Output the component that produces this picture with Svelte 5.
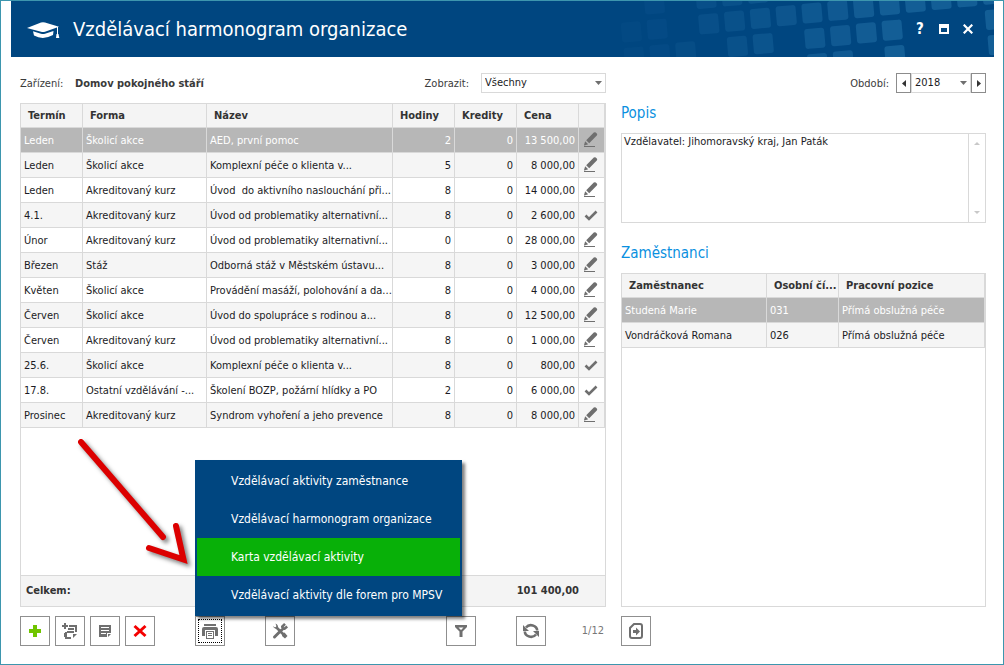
<script>
  const rows = [
    ['Leden', 'Školicí akce', 'AED, první pomoc', '2', '13 500,00', false],
    ['Leden', 'Školicí akce', 'Komplexní péče o klienta v...', '5', '8 000,00', false],
    ['Leden', 'Akreditovaný kurz', 'Úvod  do aktivního naslouchání při...', '8', '14 000,00', false],
    ['4.1.', 'Akreditovaný kurz', 'Úvod od problematiky alternativní...', '8', '2 600,00', true],
    ['Únor', 'Akreditovaný kurz', 'Úvod od problematiky alternativní...', '0', '28 000,00', false],
    ['Březen', 'Stáž', 'Odborná stáž v Městském ústavu...', '8', '3 000,00', false],
    ['Květen', 'Školicí akce', 'Provádění masáží, polohování a da...', '8', '4 000,00', false],
    ['Červen', 'Školicí akce', 'Úvod do spolupráce s rodinou a...', '8', '12 500,00', false],
    ['Červen', 'Akreditovaný kurz', 'Úvod od problematiky alternativní...', '8', '1 000,00', false],
    ['25.6.', 'Školicí akce', 'Komplexní péče o klienta v...', '8', '800,00', true],
    ['17.8.', 'Ostatní vzdělávání -...', 'Školení BOZP, požární hlídky a PO', '2', '6 000,00', true],
    ['Prosinec', 'Akreditovaný kurz', 'Syndrom vyhoření a jeho prevence', '8', '8 000,00', false]
  ];

  const employees = [
    ['Studená Marie', '031', 'Přímá obslužná péče'],
    ['Vondráčková Romana', '026', 'Přímá obslužná péče']
  ];

  const menu = [
    'Vzdělávací aktivity zaměstnance',
    'Vzdělávací harmonogram organizace',
    'Karta vzdělávací aktivity',
    'Vzdělávací aktivity dle forem pro MPSV'
  ];

  // Header tiles as [column, row] on a slanted lattice; they fade to the left.
  const tiles = [
    [-6, -1], [-4, -1], [-3, -1], [-2, -1],
    [-7, 1], [-6, 0], [-4, 0], [-3, 0], [-2, 0], [-1, 0], [0, 0], [1, 0], [2, 0], [3, 0], [4, 0], [5, 0], [6, 0], [7, 0],
    [-7, 0], [-6, 1], [-5, 1], [-3, 1], [-2, 1], [0, 1], [1, 1], [2, 1], [3, 1], [7, 1],
    [0, 2], [1, 2], [3, 2], [7, 2]
  ].map(([c, r]) => ({
    x: 212 + c * 25.8 + r * 2.8,
    y: 12 - c * 2.7 + r * 25.3,
    o: Math.min(0.22, 0.03 + (c + 7) * 0.019)
  }));

  let selected = $state(0);
  let employee = $state(0);
  let active = $state(2);
  let shown = $state('Všechny');
  let year = $state('2018');
  let note = $state('Vzdělavatel: Jihomoravský kraj, Jan Paták');
</script>

<div class="window">
  <header>
    <svg class="tiles" viewBox="0 0 394 56" aria-hidden="true">
      {#each tiles as t}
        <rect x="-10" y="-10" width="20" height="20" rx="3" fill="#58b4e4" fill-opacity={t.o} transform={`translate(${t.x} ${t.y}) rotate(-5)`} />
      {/each}
    </svg>
    <svg class="cap" viewBox="0 0 33 18" aria-hidden="true">
      <path fill="#fff" d="M0 6 L14 .5 Q16 0 18 .5 L32 4.700 L18 9.700 Q16 10.200 14 9.700Z" />
      <path fill="#fff" d="M6 9.200 L14 11.700 Q16 12.200 18 11.700 L26.500 9 L26 13 Q16 18.500 7 13.500Z" />
      <path fill="none" stroke="#fff" d="M30.500 5v8" />
      <path fill="#fff" d="M29.500 12h2l.8 4h-3.300z" />
    </svg>
    <h1>Vzdělávací harmonogram organizace</h1>
    <div class="controls">
      <button aria-label="Nápověda">?</button>
      <button aria-label="Maximalizovat"><svg width="10" height="10" viewBox="0 0 10 10"><path fill="#fff" fill-rule="evenodd" d="M0 0h10v10H0zM2 4v4h6V4z" /></svg></button>
      <button aria-label="Zavřít"><svg width="10" height="10" viewBox="0 0 10 10"><path stroke="#fff" stroke-width="2.200" d="M.7.7l8.600 8.600M9.300.7L.7 9.300" /></svg></button>
    </div>
  </header>

  <main>
    <section class="column">
      <div class="filters">
        <span class="facility">Zařízení:</span>
        <strong>Domov pokojného stáří</strong>
        <label class="push" for="show">Zobrazit:</label>
        <div class="select wide">
          <select id="show" bind:value={shown}><option>Všechny</option></select>
          <svg viewBox="0 0 7 4"><path d="M0 0h7L3.500 4z" /></svg>
        </div>
      </div>

      <div class="panel">
        <table>
          <colgroup><col class="c62" /><col class="c124" /><col /><col class="c62" /><col class="c62" /><col class="c62" /><col class="c26" /></colgroup>
          <thead>
            <tr><th>Termín</th><th>Forma</th><th>Název</th><th>Hodiny</th><th>Kredity</th><th>Cena</th><th></th></tr>
          </thead>
          <tbody>
            {#each rows as [term, form, name, hours, price, done], i}
              <tr class:selected={selected === i} onclick={() => (selected = i)}>
                <td>{term}</td><td>{form}</td><td>{name}</td>
                <td class="num">{hours}</td><td class="num">0</td><td class="num">{price}</td>
                <td class="state">
                  {#if done}
                    <svg viewBox="0 0 16 18"><path fill="none" stroke="#6f6f6f" stroke-width="2.600" d="M2.500 9.500l3.500 3.500 7.500-7.500" /></svg>
                  {:else}
                    <svg viewBox="0 0 16 18">
                      <path fill="#6f6f6f" d="M3.200 9.200L10.800 1.600Q11.800.8 12.800 1.600L14 2.800Q14.600 3.600 13.800 4.400L6.200 12.200z" />
                      <path fill="#6f6f6f" d="M2.200 10.200l3 3-3.700 1.300H1v-.6z" />
                      <path fill="#6f6f6f" d="M1 15h11v1H1z" />
                    </svg>
                  {/if}
                </td>
              </tr>
            {/each}
          </tbody>
        </table>
        <div class="total"><span>Celkem:</span><span>101 400,00</span></div>
      </div>

      <div class="toolbar">
        <div class="group">
          <button class="tool" aria-label="Přidat"><svg viewBox="0 0 18 18"><path fill="#70c400" d="M7 3h4v4h4v4h-4v4H7v-4H3V7h4z" /></svg></button>
          <button class="tool" aria-label="Přidat kopii"><svg viewBox="0 0 18 18">
            <path fill="none" stroke="#6f6f6f" stroke-width="2" d="M4 1v6M1 4h6" />
            <path fill="#6f6f6f" d="M8 3h8v7h-2V5H8zM7 6h6v2H7zM6 9h7v2H6zM4 10h2v5h4v2H4zM3 11h1v4H3zM12 12h4l-4 4z" />
          </svg></button>
          <button class="tool" aria-label="Upravit"><svg viewBox="0 0 18 18">
            <path fill="#6f6f6f" fill-rule="evenodd" d="M3 3h12v8h-4v4H3zM5 5v1h8V5zM5 8v1h8V8zM5 11v1h5v-1z" />
            <path fill="#6f6f6f" d="M12 12h3l-3 3z" />
          </svg></button>
          <button class="tool" aria-label="Smazat"><svg viewBox="0 0 18 18"><path stroke="#f40000" stroke-width="3" d="M3.500 4l11 10M14.500 4l-11 10" /></svg></button>
        </div>

        <div class="anchor">
          <button class="tool focused" aria-label="Tisk" aria-haspopup="menu"><svg viewBox="0 0 18 18">
            <path fill="#6f6f6f" d="M3 2h12v2H3z" />
            <path fill="#6f6f6f" fill-rule="evenodd" d="M3 5h12q2 0 2 2v7h-3V8H4v6H1V7q0-2 2-2z" />
            <path fill="#6f6f6f" fill-rule="evenodd" d="M5 9h8v8H5zM6 10v6h6v-6z" />
            <path fill="#6f6f6f" d="M7 11h4v1H7zM7 13h4v1H7z" />
          </svg></button>
          <div class="menu" role="menu">
            {#each menu as item, i}
              <button role="menuitem" class:active={active === i} onmouseenter={() => (active = i)}>{item}</button>
            {/each}
          </div>
          <svg class="pointer" viewBox="0 0 120 135" aria-hidden="true">
            <path d="M6 7l82 95" />
            <path d="M74 113l34.500 11.500L101 91" />
          </svg>
        </div>

        <button class="tool" aria-label="Nástroje"><svg viewBox="0 0 18 18">
          <path stroke="#6f6f6f" stroke-width="2.600" d="M5 5l9.500 9.500" />
          <path fill="#6f6f6f" d="M4.500 1.500Q7.500 2.500 7 6.500Q3 7.500 1.800 4L4 5.500 5.500 4.500z" />
          <path fill="#6f6f6f" d="M11.500 11.500l2-1 3 3.500-2.500 2.500-3-2.500z" />
          <path stroke="#6f6f6f" stroke-width="3" stroke-linecap="round" d="M3.500 15l6-6" />
          <path fill="none" stroke="#6f6f6f" stroke-width="2.600" d="M14 1.800L11.300 4.500q0 2.200 2.200 2.200L16.200 4.500M9.500 9l3-2.500" />
        </svg></button>

        <button class="tool filter" aria-label="Filtr"><svg viewBox="0 0 18 18">
          <path fill="#6f6f6f" fill-rule="evenodd" d="M3 3h12v2l-4.500 4.500V15h-3V9.500L3 5zM6.500 5.500L9 8l2.500-2.500z" />
        </svg></button>
        <button class="tool" aria-label="Obnovit"><svg viewBox="0 0 18 18">
          <path fill="none" stroke="#6f6f6f" stroke-width="2.600" d="M4 5.500a6.200 5.600 0 0 1 11.200 3M14 12.500a6.200 5.600 0 0 1-11.200-3" />
          <path fill="#6f6f6f" d="M1 3v6h6zM17 15V9h-6z" />
        </svg></button>
        <span class="counter">1/12</span>
      </div>
    </section>

    <section class="column">
      <div class="filters">
        <label class="push" for="year">Období:</label>
        <div class="period">
          <button aria-label="Předchozí rok"><svg width="4" height="7" viewBox="0 0 4 7"><path d="M4 0v7L0 3.500z" /></svg></button>
          <div class="select">
            <select id="year" bind:value={year}><option>2018</option></select>
            <svg viewBox="0 0 7 4"><path d="M0 0h7L3.500 4z" /></svg>
          </div>
          <button aria-label="Další rok"><svg width="4" height="7" viewBox="0 0 4 7"><path d="M0 0v7l4-3.500z" /></svg></button>
        </div>
      </div>

      <h2><label for="note">Popis</label></h2>
      <div class="note">
        <textarea id="note" bind:value={note}></textarea>
        <div class="scroll">
          <svg width="6" height="3" viewBox="0 0 6 3"><path d="M0 3h6L3 0z" /></svg>
          <svg width="6" height="3" viewBox="0 0 6 3"><path d="M0 0h6L3 3z" /></svg>
        </div>
      </div>

      <h2 class="spaced">Zaměstnanci</h2>
      <div class="panel">
        <table>
          <colgroup><col class="c145" /><col class="c72" /><col /></colgroup>
          <thead>
            <tr><th>Zaměstnanec</th><th>Osobní čí...</th><th>Pracovní pozice</th></tr>
          </thead>
          <tbody>
            {#each employees as person, i}
              <tr class:selected={employee === i} onclick={() => (employee = i)}>
                {#each person as value}<td>{value}</td>{/each}
              </tr>
            {/each}
          </tbody>
        </table>
      </div>

      <div class="toolbar">
        <button class="tool" aria-label="Otevřít kartu"><svg viewBox="0 0 18 18">
          <path fill="none" stroke="#6f6f6f" stroke-width="2" d="M7 2h6q2 0 2 2v10q0 2-2 2H5q-2 0-2-2V6z" />
          <path fill="#6f6f6f" d="M6 8h3V5.500L13 9.500 9 13.500V11H6z" />
        </svg></button>
      </div>
    </section>
  </main>
</div>

<style>
  :global(body) { margin: 0; }
  .window, .window * { box-sizing: border-box; }
  .window {
    display: flex;
    flex-direction: column;
    min-height: 100vh;
    border: 1px solid #3d96ae;
    background: #fff;
    color: #1b1b24;
    font: 11px/14px 'DejaVu Sans Condensed', 'Noto Sans', sans-serif;
  }
  button, select, textarea {
    margin: 0;
    padding: 0;
    border: 0;
    border-radius: 0;
    background: none;
    color: inherit;
    font: inherit;
  }
  button { cursor: pointer; }

  header {
    position: relative;
    display: flex;
    align-items: center;
    height: 56px;
    margin: 0 9px 0 10px;
    padding: 0 18px 0 16px;
    overflow: hidden;
    background: #004680;
    color: #fff;
  }
  .tiles { position: absolute; top: 0; right: 0; width: 394px; height: 56px; }
  .cap { width: 33px; height: 18px; margin-top: 4px; }
  h1 { margin: 0 0 0 13px; font-size: 20px; line-height: 26px; font-weight: 400; white-space: nowrap; }
  .controls { position: relative; display: flex; gap: 8px; margin-left: auto; }
  .controls button {
    display: flex;
    align-items: center;
    justify-content: center;
    width: 16px;
    height: 20px;
    font-size: 15px;
    font-weight: 700;
  }

  main {
    flex: 1;
    display: grid;
    grid-template-columns: minmax(0, 586fr) minmax(0, 365fr);
    gap: 15px;
    padding: 16px 17px 18px 19px;
  }
  .column { display: flex; flex-direction: column; min-width: 0; }
  .filters { display: flex; align-items: center; height: 20px; color: #3a3a3a; }
  .filters label, .filters span, .filters strong { padding-top: 2px; }
  .column:first-child .filters { margin-bottom: 10px; }
  .facility { width: 55px; }
  .push { margin-left: auto; margin-right: 12px; }
  .period .select, .period { display: flex; }
  .column:last-child .push { margin-right: 7px; }
  .period button {
    display: flex;
    align-items: center;
    justify-content: center;
    width: 15px;
    height: 20px;
    border: 1px solid #8c8c8c;
  }
  .period button path { fill: #333; }
  .select { position: relative; width: 60px; height: 20px; color: #1b1b24; }
  .wide { width: 125px; }
  .select select {
    width: 100%;
    height: 20px;
    padding: 0 16px 0 3px;
    border: 1px solid #d9d9d9;
    background: #fff;
    appearance: none;
  }
  .select svg { position: absolute; top: 8px; right: 4px; width: 7px; height: 4px; pointer-events: none; }
  .select path { fill: #6f6f6f; }

  .panel { flex: 1; display: flex; flex-direction: column; border: 1px solid #d9d9d9; }
  table { width: 100%; table-layout: fixed; border-collapse: separate; border-spacing: 0; }
  .c26 { width: 26px; }
  .c62 { width: 62px; }
  .c72 { width: 72px; }
  .c124 { width: 124px; }
  .c145 { width: 145px; }
  th, td {
    overflow: hidden;
    border: solid #d9d9d9;
    border-width: 0 1px 1px 0;
    text-align: left;
    white-space: pre;
  }
  th { height: 24px; padding: 0 0 0 7px; background: #f4f4f4; color: #333; }
  td { height: 25px; padding: 2px 3px 0; }
  tbody tr:nth-child(even) { background: #f5f5f5; }
  tbody tr.selected { background: #b7b7b7; color: #fff; }
  .num { text-align: right; }
  .state { padding: 0 4px; }
  .state svg { display: block; width: 16px; height: 18px; }
  .total {
    display: flex;
    justify-content: space-between;
    margin-top: auto;
    padding: 0 26px 0 5px;
    border-top: 1px solid #d9d9d9;
    background: #f4f4f4;
    color: #333;
    font-weight: 700;
    line-height: 30px;
  }

  .toolbar { display: flex; align-items: center; gap: 40px; margin-top: 9px; }
  .group { display: flex; gap: 5px; }
  .tool {
    position: relative;
    flex: none;
    display: flex;
    align-items: center;
    justify-content: center;
    width: 30px;
    height: 30px;
    border: 1px solid #8f8f8f;
  }
  .tool svg { width: 18px; height: 18px; }
  .focused::after { content: ''; position: absolute; inset: 2px; border: 1px dotted #000; }
  .filter { margin-left: auto; }
  .counter { width: 60px; margin-left: -40px; padding-right: 2px; color: #777; text-align: right; }

  .anchor { position: relative; }
  .menu {
    position: absolute;
    bottom: 100%;
    left: 0;
    width: 267px;
    padding: 2px;
    background: #004680;
    box-shadow: 3px 3px 3px rgba(0, 0, 0, 0.5);
    z-index: 2;
  }
  .menu button {
    display: block;
    width: 100%;
    height: 38px;
    padding-left: 34px;
    color: #fff;
    font-size: 12px;
    text-align: left;
    white-space: nowrap;
  }
  .menu .active { background: #08b008; }
  .pointer {
    position: absolute;
    right: 100%;
    bottom: 76px;
    width: 120px;
    height: 135px;
    overflow: visible;
    pointer-events: none;
    filter: drop-shadow(3px 3px 2px rgba(0, 0, 0, 0.5));
  }
  .pointer path { fill: none; stroke: #dc0000; stroke-width: 6; stroke-linecap: round; stroke-linejoin: miter; }

  h2 { margin: 0; color: #0a90e0; font-size: 15px; line-height: 40px; font-weight: 400; }
  .spaced { margin-top: 10px; }
  .note { display: flex; height: 90px; border: 1px solid #d9d9d9; }
  textarea { flex: 1; min-width: 0; padding: 1px 2px; resize: none; outline: 0; }
  .scroll {
    display: flex;
    flex-direction: column;
    align-items: center;
    justify-content: space-between;
    width: 17px;
    padding: 8px 0;
    border-left: 1px solid #d9d9d9;
  }
  .scroll path { fill: #c8c8c8; }
</style>
